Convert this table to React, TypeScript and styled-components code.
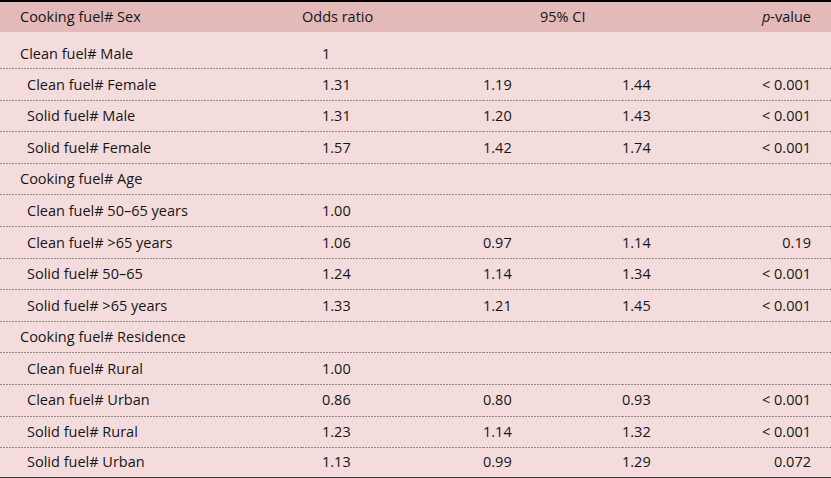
import styled, { createGlobalStyle } from 'styled-components';

type Row = {
  label: string;
  group?: boolean;
  or?: string;
  lo?: string;
  hi?: string;
  p?: string;
};

const rows: Row[] = [
  { label: 'Clean fuel# Male', group: true, or: '1' },
  { label: 'Clean fuel# Female', or: '1.31', lo: '1.19', hi: '1.44', p: '< 0.001' },
  { label: 'Solid fuel# Male', or: '1.31', lo: '1.20', hi: '1.43', p: '< 0.001' },
  { label: 'Solid fuel# Female', or: '1.57', lo: '1.42', hi: '1.74', p: '< 0.001' },
  { label: 'Cooking fuel# Age', group: true },
  { label: 'Clean fuel# 50–65 years', or: '1.00' },
  { label: 'Clean fuel# >65 years', or: '1.06', lo: '0.97', hi: '1.14', p: '0.19' },
  { label: 'Solid fuel# 50–65', or: '1.24', lo: '1.14', hi: '1.34', p: '< 0.001' },
  { label: 'Solid fuel# >65 years', or: '1.33', lo: '1.21', hi: '1.45', p: '< 0.001' },
  { label: 'Cooking fuel# Residence', group: true },
  { label: 'Clean fuel# Rural', or: '1.00' },
  { label: 'Clean fuel# Urban', or: '0.86', lo: '0.80', hi: '0.93', p: '< 0.001' },
  { label: 'Solid fuel# Rural', or: '1.23', lo: '1.14', hi: '1.32', p: '< 0.001' },
  { label: 'Solid fuel# Urban', or: '1.13', lo: '0.99', hi: '1.29', p: '0.072' },
];

const GlobalStyle = createGlobalStyle`
  html, body {
    margin: 0;
    padding: 0;
    background: #f4dcdc;
  }
`;

const Table = styled.table`
  width: 831px;
  border-collapse: collapse;
  table-layout: fixed;
  font-family: 'Open Sans', 'Noto Sans', sans-serif;
  font-size: 14.5px;
  color: #161616;
  background: #f4dcdc;
  border-top: 2px solid #000;
  border-bottom: 3px solid #3a3a3a;
`;

const HeadRow = styled.tr`
  background: #e4b9b9;
  height: 31px;
`;

const Th = styled.th<{ $align?: 'left' | 'center' | 'right'; $indent?: number }>`
  font-weight: 400;
  text-align: ${(p) => p.$align ?? 'left'};
  padding: 0;
  padding-left: ${(p) => p.$indent ?? 0}px;
  line-height: 1;
  white-space: nowrap;
`;

const BodyRow = styled.tr<{ $first?: boolean; $last?: boolean }>`
  height: ${(p) => (p.$first ? '37px' : p.$last ? '30px' : '31.6px')};

  td {
    vertical-align: ${(p) => (p.$first ? 'bottom' : 'middle')};
    padding-bottom: ${(p) => (p.$first ? '8px' : '0')};
    background-image: ${(p) =>
      p.$last
        ? 'none'
        : 'repeating-linear-gradient(to right, #958787 0 2px, transparent 2px 3px)'};
    background-size: 100% 1px;
    background-position: bottom left;
    background-repeat: no-repeat;
  }
`;

const Td = styled.td<{ $align?: 'left' | 'right'; $indent?: number }>`
  padding: 0;
  padding-left: ${(p) => p.$indent ?? 0}px;
  text-align: ${(p) => p.$align ?? 'left'};
  white-space: nowrap;
  line-height: 1;
`;

const Italic = styled.i`
  font-style: italic;
`;

export default function App() {
  return (
    <>
      <GlobalStyle />
      <Table>
        <colgroup>
          <col style={{ width: 302 }} />
          <col style={{ width: 181 }} />
          <col style={{ width: 139 }} />
          <col style={{ width: 78 }} />
          <col style={{ width: 111 }} />
          <col style={{ width: 20 }} />
        </colgroup>
        <thead>
          <HeadRow>
            <Th $indent={20}>Cooking fuel# Sex</Th>
            <Th>Odds ratio</Th>
            <Th colSpan={2} $indent={57}>
              95% CI
            </Th>
            <Th $align="right">
              <Italic>p</Italic>-value
            </Th>
            <Th />
          </HeadRow>
        </thead>
        <tbody>
          {rows.map((r, i) => (
            <BodyRow key={r.label} $first={i === 0} $last={i === rows.length - 1}>
              <Td $indent={r.group ? 20 : 27}>{r.label}</Td>
              <Td $indent={20}>{r.or}</Td>
              <Td>{r.lo}</Td>
              <Td>{r.hi}</Td>
              <Td $align="right">{r.p}</Td>
              <Td />
            </BodyRow>
          ))}
        </tbody>
      </Table>
    </>
  );
}
